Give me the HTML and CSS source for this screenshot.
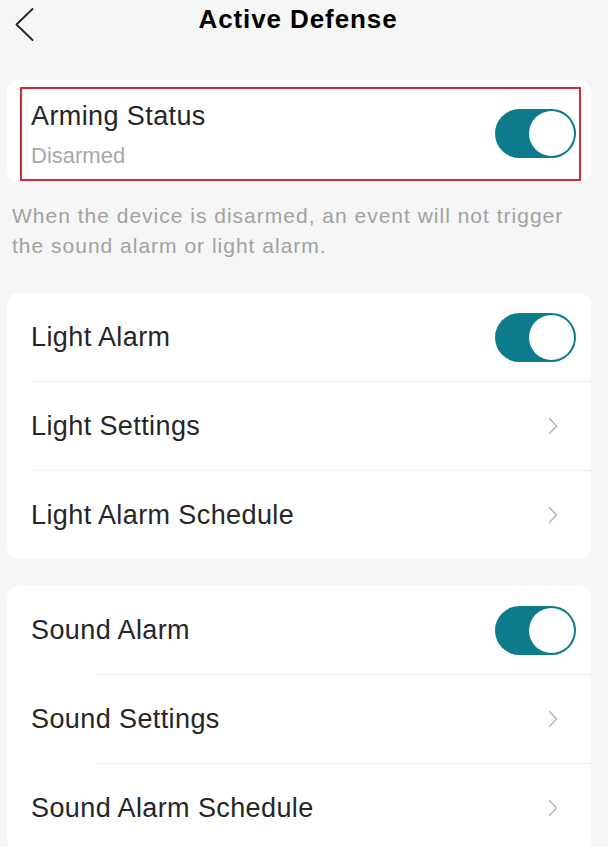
FILE: index.html
```html
<!DOCTYPE html>
<html lang="en">
<head>
<meta charset="utf-8">
<title>Active Defense</title>
<link rel="stylesheet" href="styles.css">
</head>
<body>
<header class="header">
  <div class="back">
    <svg width="19" height="33" viewBox="0 0 19 33"><path d="M17.5 1 L1.5 16.5 L17.5 32" fill="none" stroke="#222" stroke-width="1.8" stroke-linecap="round" stroke-linejoin="round"/></svg>
  </div>
  <h1 class="title">Active Defense</h1>
  <div></div>
</header>

<section class="card card-top">
  <div class="arming">
    <div class="arming-text">
      <div class="label">Arming Status</div>
      <div class="sub">Disarmed</div>
    </div>
    <span class="toggle on arming-toggle"><span class="knob"></span></span>
  </div>
</section>

<p class="note">When the device is disarmed, an event will not trigger the sound alarm or light alarm.</p>

<section class="card">
  <div class="row"><span class="label">Light Alarm</span><span class="toggle on"><span class="knob"></span></span></div>
  <div class="divider"></div>
  <div class="row"><span class="label">Light Settings</span><svg class="chev" width="10" height="18" viewBox="0 0 10 18"><path d="M1.5 1.5 L8.5 9 L1.5 16.5" fill="none" stroke="#b3b3b3" stroke-width="1.4" stroke-linecap="round" stroke-linejoin="round"/></svg></div>
  <div class="divider"></div>
  <div class="row"><span class="label">Light Alarm Schedule</span><svg class="chev" width="10" height="18" viewBox="0 0 10 18"><path d="M1.5 1.5 L8.5 9 L1.5 16.5" fill="none" stroke="#b3b3b3" stroke-width="1.4" stroke-linecap="round" stroke-linejoin="round"/></svg></div>
</section>

<section class="card card-gap">
  <div class="row"><span class="label">Sound Alarm</span><span class="toggle on"><span class="knob"></span></span></div>
  <div class="divider inset"></div>
  <div class="row"><span class="label">Sound Settings</span><svg class="chev" width="10" height="18" viewBox="0 0 10 18"><path d="M1.5 1.5 L8.5 9 L1.5 16.5" fill="none" stroke="#b3b3b3" stroke-width="1.4" stroke-linecap="round" stroke-linejoin="round"/></svg></div>
  <div class="divider inset"></div>
  <div class="row"><span class="label">Sound Alarm Schedule</span><svg class="chev" width="10" height="18" viewBox="0 0 10 18"><path d="M1.5 1.5 L8.5 9 L1.5 16.5" fill="none" stroke="#b3b3b3" stroke-width="1.4" stroke-linecap="round" stroke-linejoin="round"/></svg></div>
</section>
</body>
</html>
```

FILE: styles.css
```css
* { box-sizing: border-box; }

html, body {
  margin: 0;
  padding: 0;
  background: #f6f6f6;
  font-family: "Liberation Sans", Arial, sans-serif;
  color: #262626;
}

body { width: 608px; overflow: hidden; }

.header {
  display: grid;
  grid-template-columns: 1fr auto 1fr;
  align-items: start;
  padding: 0 20px 0 8px;
  height: 40px;
  margin-bottom: 40px;
}

.back {
  padding-top: 8px;
  padding-left: 7px;
  line-height: 0;
}

.title {
  margin: 0;
  font-size: 26px;
  font-weight: 700;
  letter-spacing: 0.9px;
  line-height: 38px;
  color: #000;
}

.card {
  background: #fff;
  border-radius: 12px;
  margin: 0 17px 0 7px;
}

.card-top {
  padding: 7px 10px 2px 13px;
}

.arming {
  display: flex;
  align-items: center;
  justify-content: space-between;
  border: 2px solid #d42a33;
  padding: 11px 3px 9px 9px;
}

.arming-toggle { margin-top: -4px; }

.label {
  font-size: 27px;
  letter-spacing: 0.4px;
  line-height: 32px;
  color: #262626;
}

.sub {
  margin-top: 10px;
  font-size: 22px;
  line-height: 28px;
  color: #a8a8a8;
}

.note {
  margin: 18px 0 32px 0;
  padding: 0 20px 0 12px;
  font-size: 21px;
  line-height: 30px;
  letter-spacing: 1px;
  color: #a2a2a2;
}

.card-gap { margin-top: 27px; }

.row {
  height: 88px;
  display: flex;
  align-items: center;
  justify-content: space-between;
  padding: 0 15px 0 24px;
}

.row .label { line-height: 88px; }

.chev { margin-right: 18px; }

.divider {
  height: 1px;
  background: #ececec;
  margin-left: 24px;
}

.divider.inset { margin-left: 88px; }

.toggle {
  display: flex;
  align-items: center;
  width: 81px;
  height: 49px;
  border-radius: 25px;
  background: #e0e0e0;
  padding: 2px;
}

.toggle.on {
  background: #0e7b8c;
  justify-content: flex-end;
}

.knob {
  width: 45px;
  height: 45px;
  border-radius: 50%;
  background: #fff;
}
```
